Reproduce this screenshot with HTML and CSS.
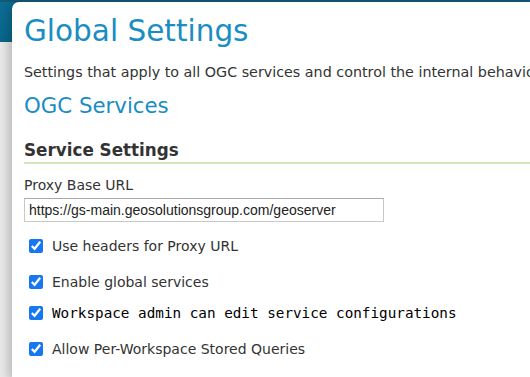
FILE: index.html
```html
<!DOCTYPE html>
<html>

<head>
  <title>Global Settings</title>
  <link rel="stylesheet" href="styles.css">
</head>

<body>
  <div class="page">
    <div class="side"></div>
    <main class="panel">
      <h1>Global Settings</h1>
      <p class="intro">Settings that apply to all OGC services and control the internal behaviour of GeoServer</p>
      <h2>OGC Services</h2>

      <h3>Service Settings</h3>
      <div class="field">
        <label for="proxy">Proxy Base URL</label>
        <input type="text" id="proxy" value="https://gs-main.geosolutionsgroup.com/geoserver">
      </div>

      <ul class="checks">
        <li><input type="checkbox" checked> <span>Use headers for Proxy URL</span></li>
        <li><input type="checkbox" checked> <span>Enable global services</span></li>
        <li class="mono"><input type="checkbox" checked> <span>Workspace admin can edit service configurations</span></li>
        <li><input type="checkbox" checked> <span>Allow Per-Workspace Stored Queries</span></li>
      </ul>
    </main>
  </div>
</body>

</html>
```

FILE: styles.css
```css
body {
  margin: 0;
  background-color: #e9e9e9;
  font-family: "DejaVu Sans", Verdana, sans-serif;
  overflow: hidden;
}

.page {
  display: flex;
  height: 377px;
  border-top: 2px solid #15587a;
  background: linear-gradient(#0b6f95, #0a668c) top / 100% 40px no-repeat, #e9e9e9;
}

.side {
  width: 12px;
  flex: none;
}

.panel {
  flex: 1;
  background-color: #fff;
  border-top-left-radius: 7px;
  padding: 9px 0 0 12px;
  box-shadow: -4px 0 10px rgba(0, 0, 0, 0.2);
  white-space: nowrap;
  overflow: hidden;
}

h1 {
  margin: 0;
  font-size: 29.5px;
  font-weight: normal;
  color: #1a8dc3;
  line-height: 40px;
}

.intro {
  margin: 12px 0 0;
  font-size: 14.3px;
  line-height: 18px;
  color: #333;
}

h2 {
  margin: 12px 0 0;
  font-size: 21.3px;
  line-height: 26px;
  font-weight: normal;
  color: #1a8dc3;
}

h3 {
  margin: 21px 0 0;
  padding-bottom: 2px;
  font-size: 16.8px;
  line-height: 20px;
  color: #333;
  border-bottom: 2px solid #d2e6b8;
}

/* proxy url field */
.field {
  margin-top: 12px;
}

.field label {
  display: block;
  font-size: 14px;
  color: #333;
  line-height: 18px;
}

.field input {
  display: block;
  margin: 4px 0 0;
  width: 360px;
  height: 24px;
  box-sizing: border-box;
  border: 1px solid #c8c8c8;
  border-top-color: #a8a8a8;
  padding: 0 4px;
  font-family: "Liberation Sans", Arial, sans-serif;
  font-size: 14px;
  color: #222;
}

.checks {
  list-style-type: none;
  margin: 15px 0 0;
  padding: 0 0 0 4px;
  font-size: 14px;
  color: #333;
}

.checks li {
  display: flex;
  align-items: center;
  height: 18px;
  margin-bottom: 18px;
}

/* the mono row sits closer to the one above */
.checks li.mono {
  margin-top: -5px;
}

.checks input {
  width: 14px;
  height: 14px;
  margin: 0 9px 0 1px;
  accent-color: #1677f0;
}

.mono span {
  font-family: "DejaVu Sans Mono", monospace;
  font-size: 14.3px;
  color: #000;
}
```
